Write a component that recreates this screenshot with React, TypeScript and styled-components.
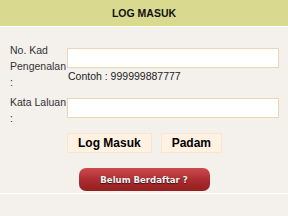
import React from "react";
import styled, { createGlobalStyle } from "styled-components";

const Global = createGlobalStyle`
  html, body { margin: 0; padding: 0; background: #f4f0ec; }
  body { font-family: "Liberation Sans", Arial, sans-serif; }
`;

const Page = styled.div`
  width: 288px;
  height: 216px;
  background: #f4f0ec;
  overflow: hidden;
`;

const Header = styled.div`
  height: 26px;
  background: #d9d98f;
  border-bottom: 1px solid #ffffff;
  display: flex;
  align-items: center;
  justify-content: center;
  font-size: 10.5px;
  font-weight: bold;
  color: #111;
`;

const Form = styled.div`
  display: grid;
  grid-template-columns: 57px 212px;
  row-gap: 4px;
  padding: 15px 0 0 10px;
`;

const Label = styled.div`
  font-size: 10.5px;
  line-height: 16px;
  color: #333;
`;

const Field = styled.div<{ $top?: boolean }>`
  align-self: ${(p) => (p.$top ? "start" : "center")};
  padding-top: ${(p) => (p.$top ? "4px" : "0")};
  display: flex;
  flex-direction: column;
`;

const Input = styled.input`
  box-sizing: border-box;
  width: 212px;
  height: 20px;
  margin: 0;
  border: 1px solid #edd6b3;
  background: #ffffff;
  outline: none;
`;

const Hint = styled.div`
  font-size: 10.5px;
  line-height: 16px;
  color: #222;
  padding-left: 1px;
`;

const Buttons = styled.div`
  grid-column: 2;
  display: flex;
  gap: 9px;
  margin-top: 3px;
`;

const Button = styled.button`
  box-sizing: border-box;
  height: 20px;
  padding: 0 10px;
  border: 1px solid #fbe6cc;
  background: #fff2e2;
  font-family: "Liberation Sans", Arial, sans-serif;
  font-size: 12px;
  font-weight: bold;
  color: #000;
  cursor: pointer;
`;

const RegisterRow = styled.div`
  display: flex;
  justify-content: center;
  padding: 15px 0 2px;
  border-bottom: 1px solid #ffffff;
`;

const RegisterButton = styled.button`
  box-sizing: border-box;
  width: 131px;
  height: 23px;
  border: none;
  border-radius: 7px;
  background: linear-gradient(#cc4a4d, #a7292d 60%, #93201f);
  color: #f2f2f2;
  font-family: "DejaVu Sans Condensed", "DejaVu Sans", sans-serif;
  font-size: 9.5px;
  font-weight: bold;
  text-shadow: 0 1px 1px #3a1010;
  cursor: pointer;
`;

export default function App() {
  return (
    <Page>
      <Global />
      <Header>LOG MASUK</Header>
      <Form>
        <Label>
          No. Kad
          <br />
          Pengenalan
          <br />:
        </Label>
        <Field>
          <Input type="text" />
          <Hint>Contoh : 999999887777</Hint>
        </Field>
        <Label>
          Kata Laluan
          <br />:
        </Label>
        <Field $top>
          <Input type="password" />
        </Field>
        <Buttons>
          <Button>Log Masuk</Button>
          <Button>Padam</Button>
        </Buttons>
      </Form>
      <RegisterRow>
        <RegisterButton>Belum Berdaftar ?</RegisterButton>
      </RegisterRow>
    </Page>
  );
}
